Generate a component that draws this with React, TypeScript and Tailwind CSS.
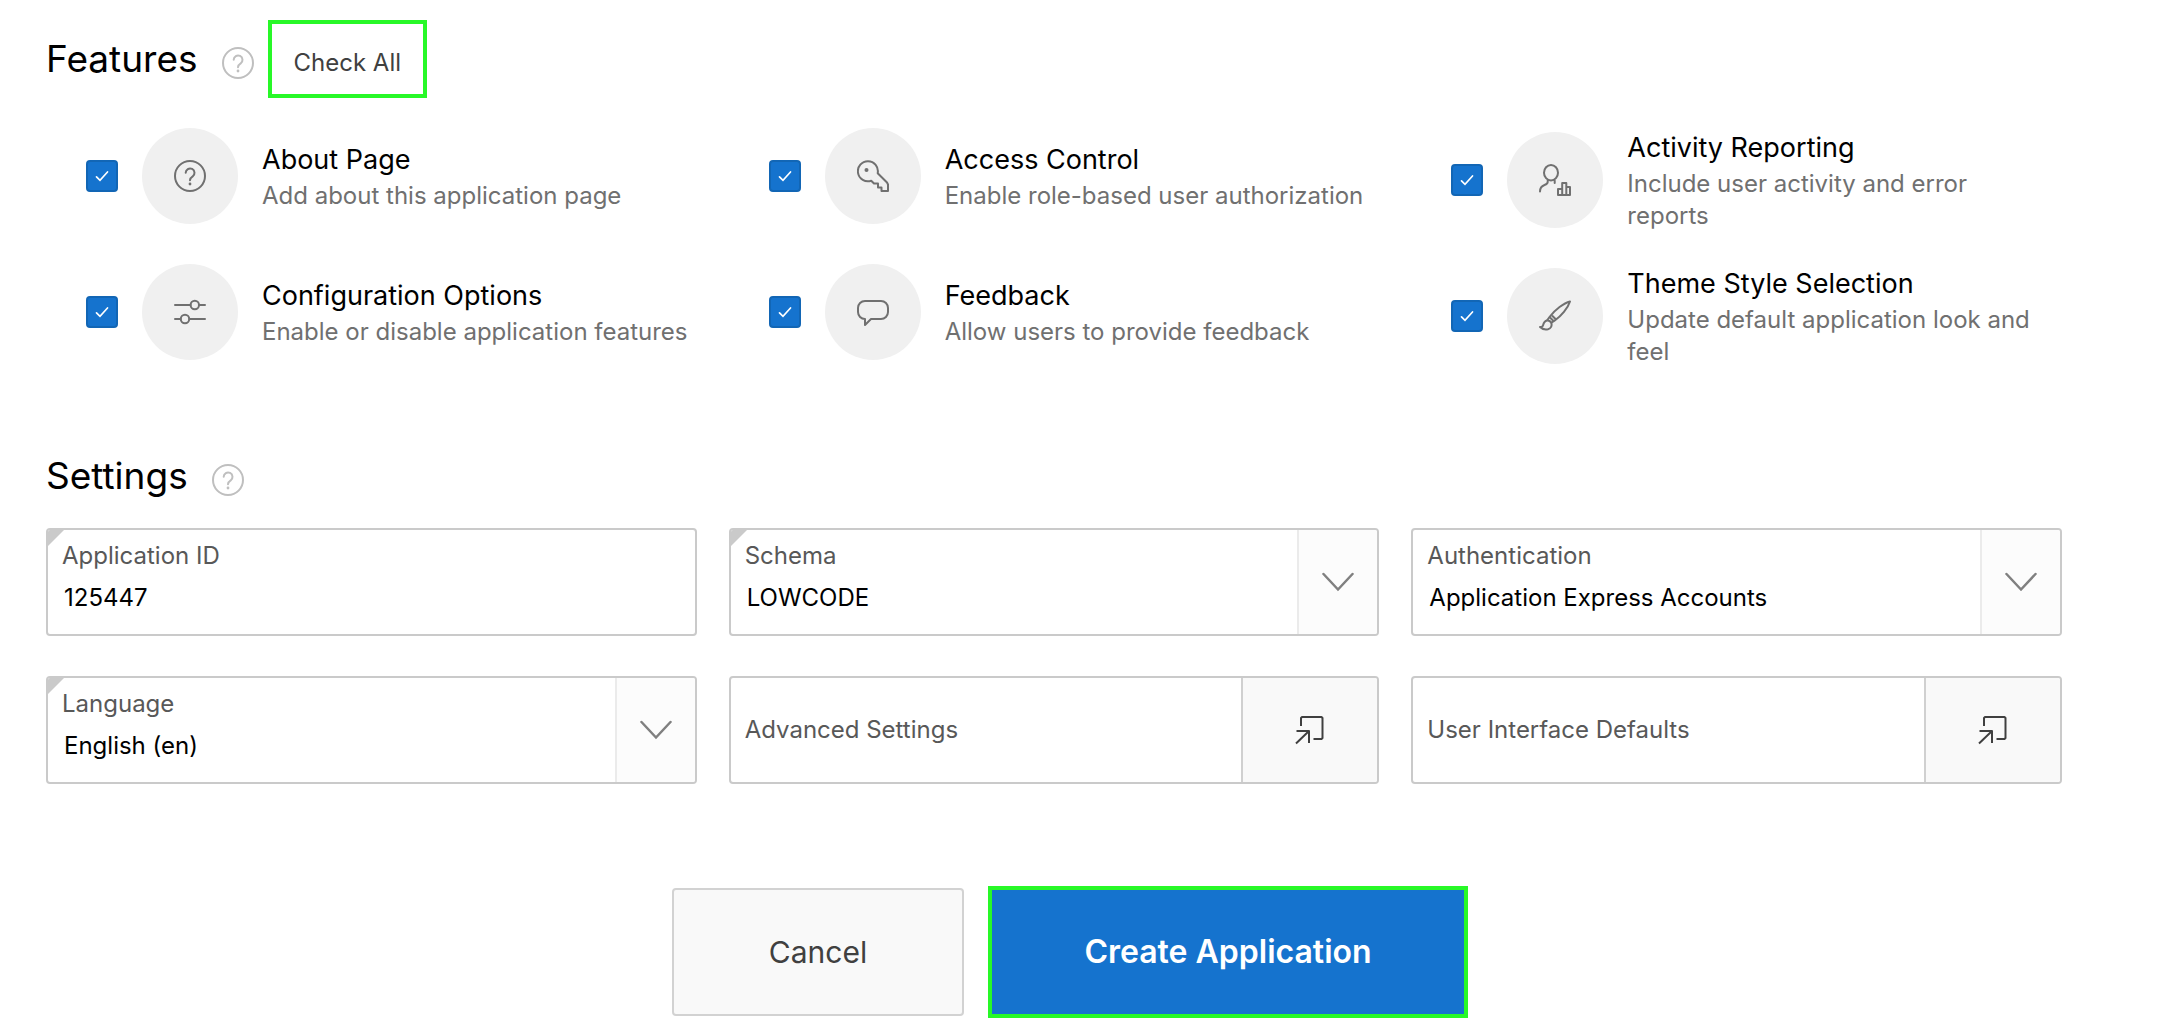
import { useState } from "react";
import type { ReactNode } from "react";

function HelpIcon() {
  return (
    <svg viewBox="0 0 32 32" fill="none" stroke="currentColor" strokeWidth="2" className="size-8" aria-hidden="true">
      <circle cx="16" cy="16" r="15" />
      <path d="M11.700 12.800a4.400 4.400 0 1 1 7 3.600c-1.800 1.200-2.700 1.900-2.700 3.800" strokeLinecap="round" />
      <circle cx="16" cy="24" r="1.400" fill="currentColor" stroke="none" />
    </svg>
  );
}

function SlidersIcon() {
  return (
    <svg viewBox="0 0 32 32" fill="none" stroke="currentColor" strokeWidth="2" strokeLinecap="round" className="size-8" aria-hidden="true">
      <path d="M1 9h15.500M25 9h6M1 23h5.500M15.500 23H31" />
      <circle cx="20.800" cy="9" r="4.200" />
      <circle cx="11" cy="23" r="4.200" />
    </svg>
  );
}

function KeyIcon() {
  return (
    <svg viewBox="0 0 32 32" fill="none" stroke="currentColor" strokeWidth="2" strokeLinejoin="round" className="size-8" aria-hidden="true">
      <path d="M20.700 13.200 30 22.500l1 2V31h-6.500v-3.500H21v-4h-4l-2.800-2.800A10 10 0 1 1 20.700 13.200Z" />
      <circle cx="9.500" cy="10" r="2" fill="currentColor" stroke="none" />
    </svg>
  );
}

function SpeechIcon() {
  return (
    <svg viewBox="0 0 32 32" fill="none" stroke="currentColor" strokeWidth="2" strokeLinejoin="round" className="size-8" aria-hidden="true">
      <path d="M8 5h16a7 7 0 0 1 7 7v4a7 7 0 0 1-7 7H14l-6 6v-6a7 7 0 0 1-7-7v-4a7 7 0 0 1 7-7Z" />
    </svg>
  );
}

function UserChartIcon() {
  return (
    <svg viewBox="0 0 32 32" fill="none" stroke="currentColor" strokeWidth="2" strokeLinejoin="round" className="size-8" aria-hidden="true">
      <ellipse cx="12" cy="8.700" rx="7" ry="7.700" />
      <path d="M8.700 16.500v1.500c0 1.500-1 2.200-3.200 3C2 22.300 1 24 1 27.500M15.700 16.500v2.500" strokeLinecap="round" />
      <path d="M19 25h4.200v6H19ZM23.200 19h4.100v12h-4.100ZM27.300 23H31v8h-3.700Z" />
    </svg>
  );
}

function BrushIcon() {
  return (
    <svg viewBox="0 0 32 32" fill="none" stroke="currentColor" strokeWidth="2" strokeLinejoin="round" className="size-8" aria-hidden="true">
      <path d="M8 20.500 10.500 17C16 9.500 25 3 31 1.500 29 8 22 16 15.500 20.700L12 23" />
      <path d="m13 15.500 4 4M10.500 17l4 4" />
      <path d="M8 20.500c-3 .5-3.500 3-4 5-.4 1.500-1.500 1.800-3 1.500 2 2 5 2.800 8 2.200 3-.7 4.200-3.400 3.300-6.200C11.500 21.200 10 20.300 8 20.500Z" />
    </svg>
  );
}

function Feature({ name, text, icon }: { name: string; text: string; icon: ReactNode }) {
  const [checked, setChecked] = useState(true);
  return (
    <label className="flex items-center pr-2 pl-10">
      <span className="relative mr-6 size-8 shrink-0">
        <input
          type="checkbox"
          checked={checked}
          onChange={() => setChecked(!checked)}
          className="peer block size-8 appearance-none rounded-sm border-2 border-[#c8c8c8] bg-white checked:border-[#1266b5] checked:bg-[#1573ce]"
        />
        <svg viewBox="0 0 32 32" fill="none" stroke="white" strokeWidth="1.700" strokeLinecap="round" className="pointer-events-none absolute inset-0 hidden size-8 peer-checked:block" aria-hidden="true">
          <path d="m10.500 16.800 3.500 3.500 7.500-8.300" />
        </svg>
      </span>
      <span className="mr-6 flex size-24 shrink-0 items-center justify-center rounded-full bg-[#f0f0f0] text-[#707070]">{icon}</span>
      <span className="block">
        <span className="block text-[27px] leading-10 text-black">{name}</span>
        <span className="block text-[24px] leading-8 text-[#707070]">{text}</span>
      </span>
    </label>
  );
}

function SectionTitle({ children }: { children: ReactNode }) {
  return (
    <>
      <h2 className="text-[37px] leading-12 text-black">{children}</h2>
      <button type="button" aria-label={`${children} help`} className="mt-2 ml-6 text-[#bfbfbf]">
        <HelpIcon />
      </button>
    </>
  );
}

function RequiredMark() {
  return (
    <svg viewBox="0 0 16 16" className="absolute top-0 left-0 size-4 text-[#cacaca]" aria-hidden="true">
      <path d="M0 0h16L0 16Z" fill="currentColor" />
    </svg>
  );
}

const fieldBox = "relative flex h-[108px] overflow-hidden rounded-sm border-2 border-[#cacaca] bg-white";

function TextField({ id, label, value }: { id: string; label: string; value: string }) {
  return (
    <div className={fieldBox}>
      <RequiredMark />
      <label htmlFor={id} className="absolute top-2.5 left-3.5 text-[24px] leading-8 text-[#585858]">{label}</label>
      <input id={id} type="text" defaultValue={value} className="w-full px-4 pt-[52px] pb-5 text-[24px] leading-8 text-black outline-none" />
    </div>
  );
}

function SelectField({ id, label, value, required }: { id: string; label: string; value: string; required?: boolean }) {
  return (
    <div className={fieldBox}>
      {required && <RequiredMark />}
      <label htmlFor={id} className="absolute top-2.5 left-3.5 text-[24px] leading-8 text-[#585858]">{label}</label>
      <select id={id} defaultValue={value} className="w-full appearance-none bg-transparent pt-[52px] pr-24 pb-5 pl-4 text-[24px] leading-8 text-black outline-none">
        <option>{value}</option>
      </select>
      <span className="pointer-events-none absolute inset-y-0 right-0 flex w-20 items-center justify-center border-l-2 border-[#ebebeb] bg-[#fcfcfc] text-[#808080]">
        <svg viewBox="0 0 32 20" fill="none" stroke="currentColor" strokeWidth="2.500" strokeLinecap="round" className="h-5 w-8" aria-hidden="true">
          <path d="m1.500 2 14.500 15.500L30.500 2" />
        </svg>
      </span>
    </div>
  );
}

function LinkField({ label }: { label: string }) {
  return (
    <div className={fieldBox}>
      <span className="flex flex-1 items-center pl-3.5 text-[24px] leading-8 text-[#585858]">{label}</span>
      <button type="button" aria-label={`Open ${label}`} className="flex w-[136px] items-center justify-center border-l-2 border-[#d0d0d0] bg-[#f9f9f9] text-[#404040]">
        <svg viewBox="0 0 32 32" fill="none" stroke="currentColor" strokeWidth="2" strokeLinejoin="round" className="size-8" aria-hidden="true">
          <path d="M7 12V4l1-1h19.500l1 1v20l-1 1h-8M2.500 17H15v12M15 17 2 29.500" />
        </svg>
      </button>
    </div>
  );
}

export default function App() {
  return (
    <main className="bg-white pt-5 pr-[102px] pb-2 pl-[46px] font-['Inter',sans-serif]">
      <section>
        <div className="flex h-[78px] items-center">
          <SectionTitle>Features</SectionTitle>
          <button type="button" className="ml-3.5 h-full border-4 border-[#28f828] px-[22px] pt-2 text-[24px] leading-8 text-[#404040]">
            Check All
          </button>
        </div>
        <div className="mt-[30px] grid grid-cols-3 items-start gap-8">
          <Feature name="About Page" text="Add about this application page" icon={<HelpIcon />} />
          <Feature name="Access Control" text="Enable role-based user authorization" icon={<KeyIcon />} />
          <Feature name="Activity Reporting" text="Include user activity and error reports" icon={<UserChartIcon />} />
          <Feature name="Configuration Options" text="Enable or disable application features" icon={<SlidersIcon />} />
          <Feature name="Feedback" text="Allow users to provide feedback" icon={<SpeechIcon />} />
          <Feature name="Theme Style Selection" text="Update default application look and feel" icon={<BrushIcon />} />
        </div>
      </section>
      <section className="mt-[84px]">
        <div className="flex items-center">
          <SectionTitle>Settings</SectionTitle>
        </div>
        <div className="mt-7 grid grid-cols-3 gap-x-8 gap-y-10">
          <TextField id="application-id" label="Application ID" value="125447" />
          <SelectField id="schema" label="Schema" value="LOWCODE" required />
          <SelectField id="authentication" label="Authentication" value="Application Express Accounts" />
          <SelectField id="language" label="Language" value="English (en)" required />
          <LinkField label="Advanced Settings" />
          <LinkField label="User Interface Defaults" />
        </div>
      </section>
      <div className="mt-[102px] flex items-center justify-center gap-6 pl-8">
        <button type="button" className="h-32 w-[292px] rounded-sm border-2 border-[#d2d2d2] bg-[#f9f9f9] text-[30px] text-[#404040]">
          Cancel
        </button>
        <button type="button" className="h-[132px] w-[480px] border-4 border-[#28f828] bg-[#1573ce] text-[32px] font-semibold text-white">
          Create Application
        </button>
      </div>
    </main>
  );
}
